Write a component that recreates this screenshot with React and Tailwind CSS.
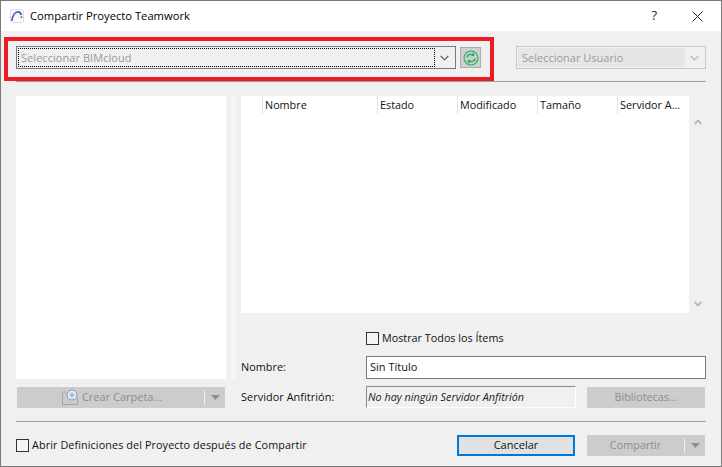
import React from "react";

const Chevron = ({ className }) => (
  <svg width="9" height="6" viewBox="0 0 9 6" fill="none" className={className}>
    <path d="M0.7 1l3.8 3.8L8.3 1" stroke="currentColor" strokeWidth="1.1" />
  </svg>
);

const ScrollArrow = ({ className }) => (
  <svg width="8" height="6" viewBox="0 0 8 6" fill="none" className={className}>
    <path d="M0.7 1L4 4.4 7.3 1" stroke="#b8b8b8" strokeWidth="1.8" />
  </svg>
);

const Check = ({ label, className, labelClass }) => (
  <div className={`flex items-center gap-[3px] ${className || ""}`}>
    <span className="w-[13px] h-[13px] border border-[#333] bg-[#f5f5f5] shrink-0" />
    <span className={`text-[10.8px] text-[#111] whitespace-nowrap ${labelClass || ""}`}>{label}</span>
  </div>
);

const SplitArrow = () => (
  <>
    <span className="w-px h-[15px] bg-[#f0f0f0] shrink-0" />
    <span className="w-[20px] flex justify-center shrink-0">
      <svg width="9" height="5" viewBox="0 0 9 5">
        <path d="M0 0h9L4.5 5z" fill="#8f8f8f" />
      </svg>
    </span>
  </>
);

const columns = [
  ["Nombre", "w-[115px]"],
  ["Estado", "w-[80px]"],
  ["Modificado", "w-[80px]"],
  ["Tamaño", "w-[80px]"],
  ["Servidor A...", "w-[71px]"],
];

export default function App() {
  return (
    <div
      className="relative w-[722px] h-[467px] bg-[#f0f0f0] border border-[#7a7a7a] overflow-hidden flex flex-col"
      style={{ fontFamily: '"Open Sans", "Noto Sans", sans-serif' }}
    >
      {/* Title bar */}
      <div className="h-[30px] bg-white flex items-center shrink-0">
        <svg width="14" height="14" viewBox="0 0 14 14" fill="none" className="ml-[9px]">
          <rect x="0.5" y="0.5" width="13" height="13" rx="2" fill="#fafafa" stroke="#dcdcdc" />
          <path d="M1.8 12C2.6 6.5 5.2 2.8 8 2.8c1.8 0 2.9 1.3 3.4 3.2" stroke="#3d62c4" strokeWidth="1.7" />
          <path d="M10.6 7.4h1.6V9h-1.6z" fill="#3d62c4" />
        </svg>
        <span className="ml-[6px] text-[11.2px] text-black mt-[1px]">Compartir Proyecto Teamwork</span>
        <span className="ml-auto text-[13px] text-[#222] mr-[35px]">?</span>
        <svg width="11" height="11" viewBox="0 0 11 11" fill="none" className="mr-[18px]">
          <path d="M0.5 0.5l10 10M10.5 0.5l-10 10" stroke="#222" strokeWidth="1" />
        </svg>
      </div>

      <div className="flex-1 flex flex-col px-[15px]">
        {/* Server + user selectors */}
        <div className="flex items-center h-[23px] mt-[15px]">
          <div className="w-[440px] h-[23px] border border-[#7a7a7a] bg-[#f0f0f0] flex items-center p-[1px]">
            <div className="flex-1 h-full border border-dotted border-black flex items-center pl-[2px] pt-[1px] text-[11px] text-[#9a9a9a] tracking-[0.05px]">
              Seleccionar BIMcloud
            </div>
            <span className="w-[19px] flex justify-center text-[#555]">
              <Chevron />
            </span>
          </div>
          <div className="ml-[4px] w-[21px] h-[21px] bg-[#cfcfcf] border border-[#adadad] flex items-center justify-center">
            <svg width="16" height="16" viewBox="0 0 16 16" fill="none" stroke="#1fb25a">
              <circle cx="8" cy="8" r="7" strokeWidth="1.1" />
              <path d="M3.8 7.5C4.3 5 7.5 3.3 10.8 5.2M12.2 8.5C11.7 11 8.5 12.7 5.2 10.8" strokeWidth="1.4" />
              <path d="M9.6 2.8l1.5 2.4-2.5.5M6.4 13.2L4.9 10.8l2.5-.5" strokeWidth="1.2" />
            </svg>
          </div>
          <div className="ml-[35px] w-[190px] h-[23px] border border-[#c8c8c8] bg-[#f0f0f0] flex items-center p-[1px]">
            <div className="flex-1 h-full bg-[#e6e6e6] flex items-center pl-[4px] pt-[1px] text-[11px] text-[#9a9a9a]">
              Seleccionar Usuario
            </div>
            <span className="w-[19px] flex justify-center text-[#b4b4b4]">
              <Chevron />
            </span>
          </div>
        </div>

        <div className="h-px bg-[#a0a0a0] mt-[12px] w-[690px] shrink-0" />

        {/* Folder tree + project list */}
        <div className="flex mt-[14px]">
          <div className="w-[210px] flex flex-col">
            <div className="h-[283px] bg-white" />
            <div className="mt-[8px] ml-[1px] w-[208px] h-[21px] bg-[#cccccc] flex items-center text-[11px] text-[#8c8c8c]">
              <div className="flex-1 flex items-center justify-center gap-[3px] pl-[2px]">
                <svg width="18" height="17" viewBox="0 0 18 17" fill="none">
                  <path d="M5 3H1.5v12.5h15V9" stroke="#a3a3a3" />
                  <circle cx="11" cy="6" r="5" fill="#e4eaf4" stroke="#7f9cc8" />
                  <path d="M8.5 6h5M11 3.5v5" stroke="#7f9cc8" />
                </svg>
                Crear Carpeta...
              </div>
              <SplitArrow />
            </div>
          </div>

          {/* Splitter */}
          <div className="w-[5px] h-[283px] ml-[5px] mr-[5px] bg-[#f5f5f5]" />

          <div className="w-[465px] flex flex-col">
            <div className="flex h-[217px]">
              <div className="w-[448px] bg-white">
                <div className="flex h-[18px] pl-[21px]">
                  {columns.map(([name, width]) => (
                    <div
                      key={name}
                      className={`${width} border-l border-[#e3e3e3] pl-[2px] text-[10.8px] leading-[18px] text-[#111] whitespace-nowrap`}
                    >
                      {name}
                    </div>
                  ))}
                </div>
              </div>
              <div className="flex-1 flex flex-col items-center justify-between pt-[23px] pb-[6px]">
                <ScrollArrow className="rotate-180" />
                <ScrollArrow />
              </div>
            </div>

            <Check label="Mostrar Todos los Ítems" className="mt-[18px] ml-[125px] h-[14px]" />

            <div className="flex items-center mt-[11px]">
              <span className="w-[125px] text-[10.9px] text-[#111]">Nombre:</span>
              <div className="w-[340px] h-[23px] bg-white border border-[#7a7a7a] flex items-center pl-[3px] text-[11px] text-[#111]">
                Sin Título
              </div>
            </div>

            <div className="flex items-center mt-[7px] whitespace-nowrap">
              <span className="w-[125px] text-[10.9px] text-[#111] tracking-[0.05px]">Servidor Anfitrión:</span>
              <div className="w-[210px] h-[22px] border border-[#8a8a8a] border-r-white border-b-white flex items-center pl-[1px] text-[10.8px] italic text-[#222]">
                No hay ningún Servidor Anfitrión
              </div>
              <div className="ml-[11px] w-[118px] h-[21px] bg-[#cccccc] flex items-center justify-center text-[10.8px] text-[#8c8c8c]">
                Bibliotecas...
              </div>
            </div>
          </div>
        </div>

        <div className="h-px bg-[#a0a0a0] mt-[13px] w-[690px] shrink-0" />

        {/* Footer */}
        <div className="flex items-center mt-[12px] h-[22px]">
          <Check label="Abrir Definiciones del Proyecto después de Compartir" labelClass="tracking-[0.1px]" />
          <div className="ml-auto w-[118px] h-[21px] mr-[12px] bg-[#e1e1e1] border-2 border-[#0078d7] flex items-center justify-center text-[11px] text-[#111]">
            Cancelar
          </div>
          <div className="w-[118px] h-[21px] mr-[1px] bg-[#cccccc] flex items-center text-[10.8px] text-[#8c8c8c]">
            <span className="flex-1 text-center">Compartir</span>
            <SplitArrow />
          </div>
        </div>
      </div>

      {/* Red highlight drawn over the screenshot */}
      <div className="absolute left-[3px] top-[36px] w-[490px] h-[44px] border-[4px] border-[#ed1c24] pointer-events-none" />
    </div>
  );
}
